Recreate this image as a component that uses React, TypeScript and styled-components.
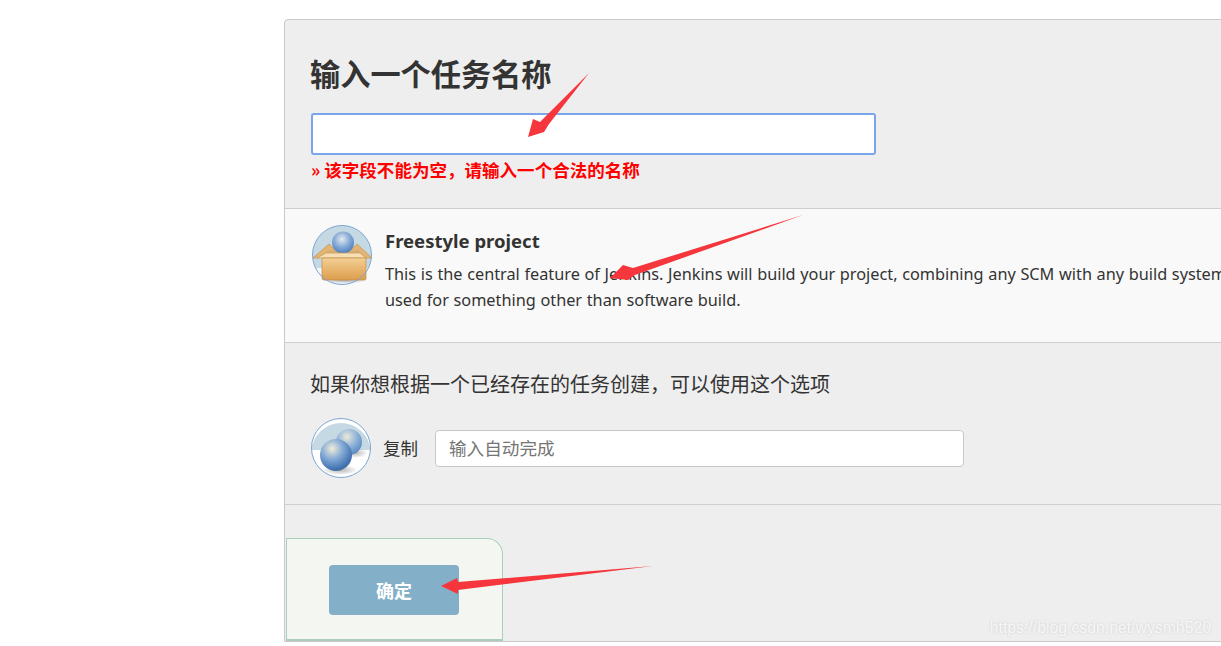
import React from 'react';
import styled, { createGlobalStyle } from 'styled-components';

const GlobalStyle = createGlobalStyle`
  html, body {
    margin: 0;
    padding: 0;
    height: 646px;
    overflow: hidden;
    background: #fff;
  }

  * {
    box-sizing: border-box;
  }
`;

const Page = styled.div`
  position: relative;
  width: 1221px;
  height: 646px;
  overflow: hidden;
  padding: 19px 0 0 284px;
  font-family: 'Noto Sans', 'Noto Sans CJK SC', sans-serif;
  color: #333;
`;

const Panel = styled.div`
  width: 1200px;
  height: 623px;
  display: flex;
  flex-direction: column;
  background: #eee;
  border: 1px solid #c9c9c9;
  border-radius: 4px 0 0 0;
`;

const NameSection = styled.section`
  height: 189px;
  padding: 31px 0 0 25px;
  border-bottom: 1px solid #cfcfcf;
`;

const Title = styled.h1`
  margin: 0;
  height: 44px;
  font-family: 'Noto Sans CJK SC', sans-serif;
  font-size: 30.2px;
  line-height: 44px;
  font-weight: 700;
  color: #333;
`;

const NameInput = styled.div`
  width: 565px;
  height: 42px;
  margin: 18px 0 0 1px;
  background: #fff;
  border: 2px solid #7aa5ea;
  border-radius: 3px;
`;

const ErrorText = styled.div`
  margin: 3px 0 0 1px;
  font-family: 'Noto Sans CJK SC', sans-serif;
  font-size: 17.55px;
  line-height: 24px;
  font-weight: 700;
  color: #f00;
`;

const ProjectRow = styled.section`
  height: 134px;
  display: flex;
  gap: 12px;
  padding: 15px 0 0 26px;
  background: #f9f9f9;
  border-bottom: 1px solid #cfcfcf;
`;

const ProjectBody = styled.div`
  min-width: 0;
  padding-top: 1px;
`;

const ProjectName = styled.div`
  font-size: 18.5px;
  line-height: 32px;
  font-weight: 700;
  color: #333;
`;

const ProjectText = styled.p`
  margin: 4px 0 0;
  font-size: 16.3px;
  line-height: 26px;
  word-spacing: 0.4px;
  color: #333;
`;

const CopySection = styled.section`
  height: 162px;
  padding: 26px 0 0 25px;
  border-bottom: 1px solid #cfcfcf;
`;

const CopyHint = styled.div`
  font-family: 'Noto Sans CJK SC', sans-serif;
  font-size: 20px;
  line-height: 30px;
  color: #333;
`;

const CopyRow = styled.div`
  display: flex;
  align-items: center;
  margin-top: 18px;
`;

const CopyLabel = styled.span`
  margin: 0 0 2px 11px;
  font-family: 'Noto Sans CJK SC', sans-serif;
  font-size: 17.5px;
  color: #333;
`;

const CopyInput = styled.div`
  width: 529px;
  height: 37px;
  margin-left: 17px;
  padding-left: 13px;
  background: #fff;
  border: 1px solid #c8c8c8;
  border-radius: 4px;
  font-family: 'Noto Sans CJK SC', sans-serif;
  font-size: 17.6px;
  line-height: 34px;
  color: #757575;
`;

const Footer = styled.section`
  flex: 1;
  padding: 33px 0 0 1px;
`;

const ButtonBar = styled.div`
  width: 217px;
  height: 103px;
  padding: 26px 0 0 42px;
  background: #f4f7f1;
  border: 1px solid #a9cfbb;
  border-bottom-width: 2px;
  border-radius: 0 16px 0 0;
`;

const SubmitButton = styled.button`
  display: block;
  width: 130px;
  height: 50px;
  padding: 0;
  border: 0;
  border-radius: 4px;
  background: #83b0c8;
  font-family: 'Noto Sans CJK SC', sans-serif;
  font-size: 18px;
  font-weight: 700;
  color: #fff;
`;

const Arrows = styled.svg`
  position: absolute;
  top: 0;
  left: 0;
  pointer-events: none;
`;

const Watermark = styled.div`
  position: absolute;
  right: 10px;
  top: 618px;
  font-family: 'Liberation Sans', sans-serif;
  font-size: 15.8px;
  line-height: 20px;
  color: rgba(255, 255, 255, 0.8);
  text-shadow: 0 0 2px rgba(170, 170, 170, 0.5);
`;

const BoxIcon = () => (
  <svg width="62" height="62" viewBox="0 0 62 62">
    <defs>
      <radialGradient id="ball1" cx="0.45" cy="0.35" r="0.65">
        <stop offset="0" stopColor="#e3ebf0" />
        <stop offset="0.5" stopColor="#8fb0d8" />
        <stop offset="1" stopColor="#4d7fc0" />
      </radialGradient>
      <linearGradient id="box1" x1="0" y1="0" x2="0" y2="1">
        <stop offset="0" stopColor="#f3cf94" />
        <stop offset="1" stopColor="#dd9d4c" />
      </linearGradient>
      <radialGradient id="shade1" cx="0.5" cy="0.5" r="0.5">
        <stop offset="0" stopColor="#777" stopOpacity="0.8" />
        <stop offset="1" stopColor="#777" stopOpacity="0" />
      </radialGradient>
    </defs>
    <circle cx="31" cy="31" r="29.5" fill="#c5d9e4" />
    <path d="M4.5 44 A29.5 29.5 0 0 0 57.5 44 Z" fill="#f5f5f5" />
    <ellipse cx="34" cy="55" rx="24" ry="4.5" fill="url(#shade1)" />
    <path d="M2 34 L18 20 L24 26 L8 34 Z" fill="#e3b575" stroke="#c48f4a" strokeWidth="0.7" />
    <path d="M61 34 L46 20 L40 26 L55 34 Z" fill="#e3b575" stroke="#c48f4a" strokeWidth="0.7" />
    <path d="M6 34 L19 26 L48 26 L55 34 Z" fill="#d9ae74" />
    <circle cx="32" cy="18.5" r="11" fill="url(#ball1)" />
    <path d="M6 34 L15 29 L49 29 L55 34 Z" fill="#f7dfb3" stroke="#c99a5a" strokeWidth="0.7" />
    <path d="M11 34 H55 V54 Q55 56 53 56 H13 Q11 56 11 54 Z" fill="url(#box1)" stroke="#c28c48" strokeWidth="0.7" />
    <circle cx="31" cy="31" r="29.5" fill="none" stroke="#7ea6d2" strokeWidth="1" />
  </svg>
);

const CopyIcon = () => (
  <svg width="62" height="62" viewBox="0 0 62 62">
    <defs>
      <radialGradient id="ball2" cx="0.38" cy="0.3" r="0.78">
        <stop offset="0" stopColor="#f0eed8" />
        <stop offset="0.42" stopColor="#86abd6" />
        <stop offset="0.85" stopColor="#3f70b0" />
        <stop offset="1" stopColor="#5a7596" />
      </radialGradient>
      <radialGradient id="ball3" cx="0.42" cy="0.3" r="0.78">
        <stop offset="0" stopColor="#ebe9d8" />
        <stop offset="0.5" stopColor="#8fb2da" />
        <stop offset="1" stopColor="#4f7fb8" />
      </radialGradient>
      <radialGradient id="shade2" cx="0.5" cy="0.5" r="0.5">
        <stop offset="0" stopColor="#8c8c8c" stopOpacity="0.65" />
        <stop offset="1" stopColor="#8c8c8c" stopOpacity="0" />
      </radialGradient>
    </defs>
    <circle cx="31" cy="31" r="29.5" fill="#fff" />
    <path d="M1.6 33 A29.5 29.5 0 0 1 60.4 33 Z" fill="#c5d9e4" />
    <ellipse cx="45" cy="36" rx="13" ry="5" fill="url(#shade2)" />
    <ellipse cx="30" cy="53" rx="18" ry="5" fill="url(#shade2)" />
    <circle cx="39" cy="25" r="13" fill="url(#ball3)" />
    <circle cx="26" cy="38" r="16" fill="url(#ball2)" />
    <circle cx="31" cy="31" r="29.5" fill="none" stroke="#7ea6d2" strokeWidth="1" />
  </svg>
);

const App = () => {
  return (
    <Page>
      <GlobalStyle />
      <Panel>
        <NameSection>
          <Title>输入一个任务名称</Title>
          <NameInput />
          <ErrorText>» 该字段不能为空，请输入一个合法的名称</ErrorText>
        </NameSection>
        <ProjectRow>
          <BoxIcon />
          <ProjectBody>
            <ProjectName>Freestyle project</ProjectName>
            <ProjectText>
              This is the central feature of Jenkins. Jenkins will build your project, combining any SCM with any build system and this can be even
              <br />
              used for something other than software build.
            </ProjectText>
          </ProjectBody>
        </ProjectRow>
        <CopySection>
          <CopyHint>如果你想根据一个已经存在的任务创建，可以使用这个选项</CopyHint>
          <CopyRow>
            <CopyIcon />
            <CopyLabel>复制</CopyLabel>
            <CopyInput>输入自动完成</CopyInput>
          </CopyRow>
        </CopySection>
        <Footer>
          <ButtonBar>
            <SubmitButton>确定</SubmitButton>
          </ButtonBar>
        </Footer>
      </Panel>
      <Arrows width="1221" height="646" viewBox="0 0 1221 646">
        <polygon points="589,73 549,124 544,132 528,137 533,119 540,122" fill="#f5363c" />
        <polygon points="803,215 635,275 628,280 610,278 623,265 633,268" fill="#f5363c" />
        <polygon points="653,566 458,590 458,594 441,586 457,578 458,582" fill="#f5363c" />
      </Arrows>
      <Watermark>https://blog.csdn.net/wysmh520</Watermark>
    </Page>
  );
};

export default App;
